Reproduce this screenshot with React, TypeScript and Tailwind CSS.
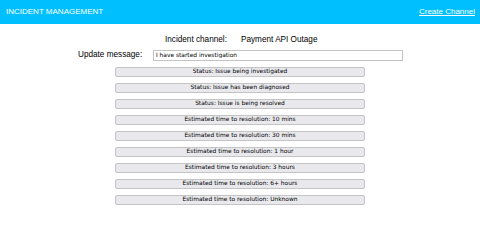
const actions = [
  "Status: Issue being investigated",
  "Status: Issue has been diagnosed",
  "Status: Issue is being resolved",
  "Estimated time to resolution: 10 mins",
  "Estimated time to resolution: 30 mins",
  "Estimated time to resolution: 1 hour",
  "Estimated time to resolution: 3 hours",
  "Estimated time to resolution: 6+ hours",
  "Estimated time to resolution: Unknown",
];

export default function App() {
  return (
    <div className="w-[480px] h-[250px] bg-white" style={{ fontFamily: '"Liberation Sans", Arial, sans-serif' }}>
      <header className="h-[24px] bg-[#00bfff] flex items-center justify-between pl-[6px] pr-[5px] text-white">
        <span className="text-[8px] leading-none">INCIDENT MANAGEMENT</span>
        <a href="#" className="text-[8px] leading-none underline">Create Channel</a>
      </header>

      <div className="flex items-center h-[10px] mt-[11px] text-[8.2px] text-black whitespace-nowrap">
        <span className="ml-[165px] w-[76px]">Incident channel:</span>
        <span>Payment API Outage</span>
      </div>
      <div className="flex items-center mt-[4px] text-[8.2px] text-black whitespace-nowrap">
        <span className="ml-[78px] w-[75px]">Update message:</span>
        <input
          defaultValue="I have started investigation"
          className="w-[250px] h-[11px] border border-[#c4c4c4] px-[2px] text-[5.9px] text-black outline-none"
          style={{ fontFamily: '"DejaVu Sans", Verdana, sans-serif' }}
        />
      </div>

      <div className="flex flex-col items-center gap-[6px] mt-[6px]">
        {actions.map((a) => (
          <button
            key={a}
            type="button"
            className="w-[250px] h-[10px] rounded-[2px] border border-[#c4c4c4] bg-[#e9e9ed] text-[5.9px] leading-none text-black flex items-center justify-center"
            style={{ fontFamily: '"DejaVu Sans", Verdana, sans-serif' }}
          >
            {a}
          </button>
        ))}
      </div>
    </div>
  );
}
